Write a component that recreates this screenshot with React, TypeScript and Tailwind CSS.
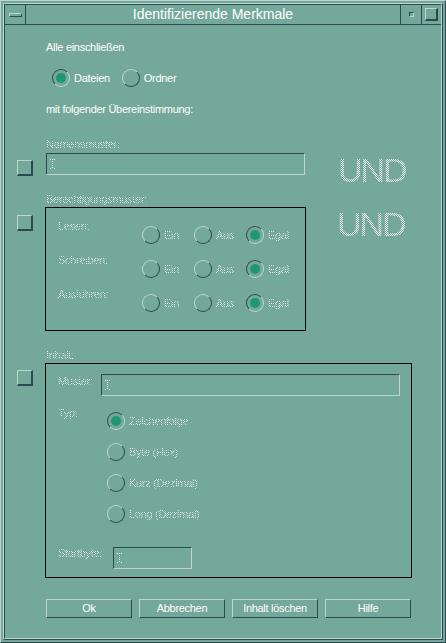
import React from "react";

const txt = "text-[11px] leading-[13px] tracking-[-0.3px] whitespace-nowrap";
const dim =
  "bg-[repeating-conic-gradient(#ffffff_0_25%,transparent_0_50%)] bg-size-[2px_2px] bg-clip-text text-transparent";
const raised =
  "border-t border-l border-r border-b border-t-[#bcd6cf] border-l-[#bcd6cf] border-r-[#2d4a50] border-b-[#2d4a50]";
const sunken =
  "border-t border-l border-r border-b border-t-[#2d4a50] border-l-[#2d4a50] border-r-[#bcd6cf] border-b-[#bcd6cf]";

function Radio({ on = false, label, muted = false }: { on?: boolean; label: string; muted?: boolean }) {
  return (
    <div className="flex items-center gap-[4px]">
      <span
        className={`flex size-[18px] shrink-0 items-center justify-center rounded-full ${on ? sunken : raised}`}
      >
        {on && <span className="size-[10px] rounded-full bg-[#1f9872]" />}
      </span>
      <span className={`${txt} ${muted ? dim : "text-white"}`}>{label}</span>
    </div>
  );
}

function Check() {
  return (
    <span className="block size-[16px] border-t border-l border-r-2 border-b-2 border-t-[#bcd6cf] border-l-[#bcd6cf] border-r-[#2d4a50] border-b-[#2d4a50]" />
  );
}

function Caret() {
  return (
    <svg width="5" height="10" viewBox="0 0 5 10" className="ml-[3px] mt-[5px]">
      <g fill="#eef4f2">
        <rect x="0" y="0" width="1" height="1" />
        <rect x="2" y="0" width="1" height="1" />
        <rect x="4" y="0" width="1" height="1" />
        <rect x="2" y="2" width="1" height="1" />
        <rect x="2" y="4" width="1" height="1" />
        <rect x="2" y="6" width="1" height="1" />
        <rect x="0" y="9" width="1" height="1" />
        <rect x="2" y="8" width="1" height="1" />
        <rect x="4" y="9" width="1" height="1" />
      </g>
    </svg>
  );
}

function Field({ width }: { width: string }) {
  return (
    <div className={`flex h-[22px] shrink-0 items-start ${width} ${sunken}`}>
      <Caret />
    </div>
  );
}

function Und({ className = "" }: { className?: string }) {
  return (
    <span className={`text-[34px] leading-none tracking-[-2px] ${dim} ${className}`}>UND</span>
  );
}

const perms = ["Lesen:", "Schreiben:", "Ausführen:"];
const types = ["Zeichenfolge", "Byte (Hex)", "Kurz (Dezimal)", "Long (Dezimal)"];
const buttons = ["Ok", "Abbrechen", "Inhalt löschen", "Hilfe"];

export default function App() {
  return (
    <div
      className={`h-[643px] w-[446px] bg-[#74a89a] p-[2px] font-['Liberation_Sans',Arial,sans-serif] text-white ${raised}`}
    >
      <div className={`h-full ${raised}`}>
        <div className={`flex h-full flex-col ${sunken}`}>
          {/* title bar */}
          <div className="flex h-[20px] shrink-0 border-b border-b-[#2d4a50]">
            <div className="flex w-[21px] items-center justify-center border-r border-r-[#2d4a50]">
              <span className={`h-[4px] w-[13px] ${raised}`} />
            </div>
            <div className="flex flex-1 items-center justify-center text-[14px] leading-[19px]">
              Identifizierende Merkmale
            </div>
            <div className="flex w-[21px] items-center justify-center border-l border-l-[#2d4a50]">
              <span className={`size-[5px] ${sunken}`} />
            </div>
            <div className="flex w-[20px] items-center justify-center border-l border-l-[#2d4a50]">
              <span className="size-[13px] border-t border-l border-r-2 border-b-2 border-t-[#bcd6cf] border-l-[#bcd6cf] border-r-[#2d4a50] border-b-[#2d4a50]" />
            </div>
          </div>

          {/* client */}
          <div className="flex flex-1 flex-col pl-[12px]">
            <p className={`mt-[16px] pl-[29px] ${txt}`}>Alle einschließen</p>
            <div className="mt-[15px] flex gap-[12px] pl-[35px]">
              <Radio on label="Dateien" />
              <Radio label="Ordner" />
            </div>
            <p className={`mt-[16px] pl-[29px] ${txt}`}>mit folgender Übereinstimmung:</p>

            <p className={`mt-[22px] pl-[29px] ${txt}`}>
              <span className={dim}>Namensmuster:</span>
            </p>
            <div className="mt-[2px] flex h-[22px] items-start">
              <div className="w-[29px] shrink-0 pt-[7px]">
                <Check />
              </div>
              <Field width="w-[259px]" />
              <Und className="ml-[33px]" />
            </div>

            <p className={`mt-[18px] pl-[29px] ${txt}`}>
              <span className={dim}>Berechtigungsmuster:</span>
            </p>
            <div className="mt-[1px] flex items-start">
              <div className="w-[28px] shrink-0 pt-[8px]">
                <Check />
              </div>
              <div className="flex h-[124px] w-[261px] shrink-0 flex-col gap-[10px] border border-black pl-[12px] pt-[12px]">
                {perms.map((p) => (
                  <div key={p} className="flex h-[24px]">
                    <span className={`w-[84px] ${txt}`}>
                      <span className={dim}>{p}</span>
                    </span>
                    <div className="mt-[6px] flex">
                      {["Ein", "Aus", "Egal"].map((o) => (
                        <div key={o} className="w-[52px]">
                          <Radio on={o === "Egal"} label={o} muted />
                        </div>
                      ))}
                    </div>
                  </div>
                ))}
              </div>
              <Und className="ml-[31px]" />
            </div>

            <p className={`mt-[18px] pl-[29px] ${txt}`}>
              <span className={dim}>Inhalt:</span>
            </p>
            <div className="mt-[1px] flex items-start">
              <div className="w-[28px] shrink-0 pt-[7px]">
                <Check />
              </div>
              <div className="flex h-[215px] w-[367px] shrink-0 flex-col border border-black pl-[12px] pt-[10px]">
                <div className="flex items-start">
                  <span className={`mt-[1px] w-[43px] ${txt}`}>
                    <span className={dim}>Muster:</span>
                  </span>
                  <Field width="w-[299px]" />
                </div>
                <div className="mt-[11px] flex items-start">
                  <span className={`w-[49px] ${txt}`}>
                    <span className={dim}>Typ:</span>
                  </span>
                  <div className="mt-[5px] flex flex-col gap-[13px]">
                    {types.map((t, i) => (
                      <Radio key={t} on={i === 0} label={t} muted />
                    ))}
                  </div>
                </div>
                <div className="mt-[24px] flex items-start">
                  <span className={`w-[55px] ${txt}`}>
                    <span className={dim}>Startbyte:</span>
                  </span>
                  <Field width="w-[79px]" />
                </div>
              </div>
            </div>

            <div className="ml-[29px] mt-[21px] grid w-[365px] grid-cols-4 gap-[7px]">
              {buttons.map((b) => (
                <div key={b} className={`flex h-[19px] items-center justify-center ${txt} ${raised}`}>
                  {b}
                </div>
              ))}
            </div>
          </div>
        </div>
      </div>
    </div>
  );
}
